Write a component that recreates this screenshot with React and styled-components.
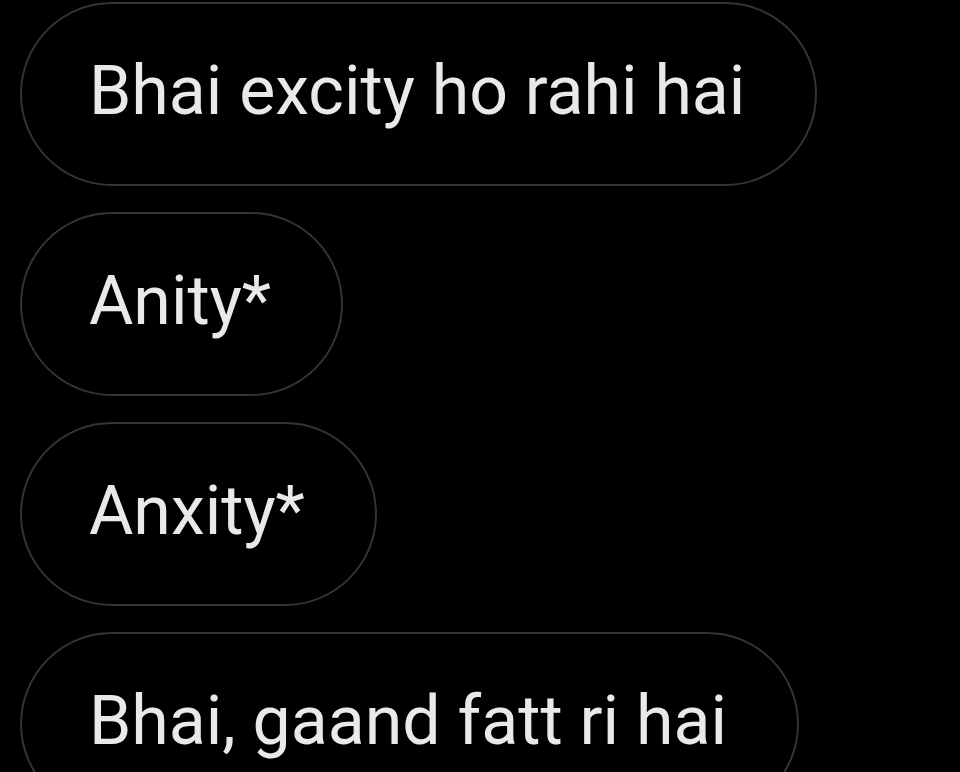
import React from 'react';
import styled, { createGlobalStyle } from 'styled-components';

const messages = [
    'Bhai excity ho rahi hai',
    'Anity*',
    'Anxity*',
    'Bhai, gaand fatt ri hai',
];

function App() {
    return (
        <>
            <GlobalStyle />
            <Thread>
                {messages.map((text, i) => (
                    <Bubble key={i}>{text}</Bubble>
                ))}
            </Thread>
        </>
    );
}

const GlobalStyle = createGlobalStyle`
    html, body {
        margin: 0;
        padding: 0;
        background: #000;
        overflow: hidden;
    }
`;

const Thread = styled.div`
    display: flex;
    flex-direction: column;
    align-items: flex-start;
    gap: 26px;
    padding: 2px 0 0 20px;
    height: 772px;
    box-sizing: border-box;
`;

const Bubble = styled.div`
    flex-shrink: 0;
    display: inline-flex;
    align-items: center;
    box-sizing: border-box;
    height: 184px;
    padding: 0 70px 6px 67px;
    border: 2px solid #343434;
    border-radius: 92px;
    color: #e9e9e9;
    font-family: Roboto, "Liberation Sans", sans-serif;
    font-size: 68px;
    line-height: 1;
    white-space: nowrap;
`;

export default App;
